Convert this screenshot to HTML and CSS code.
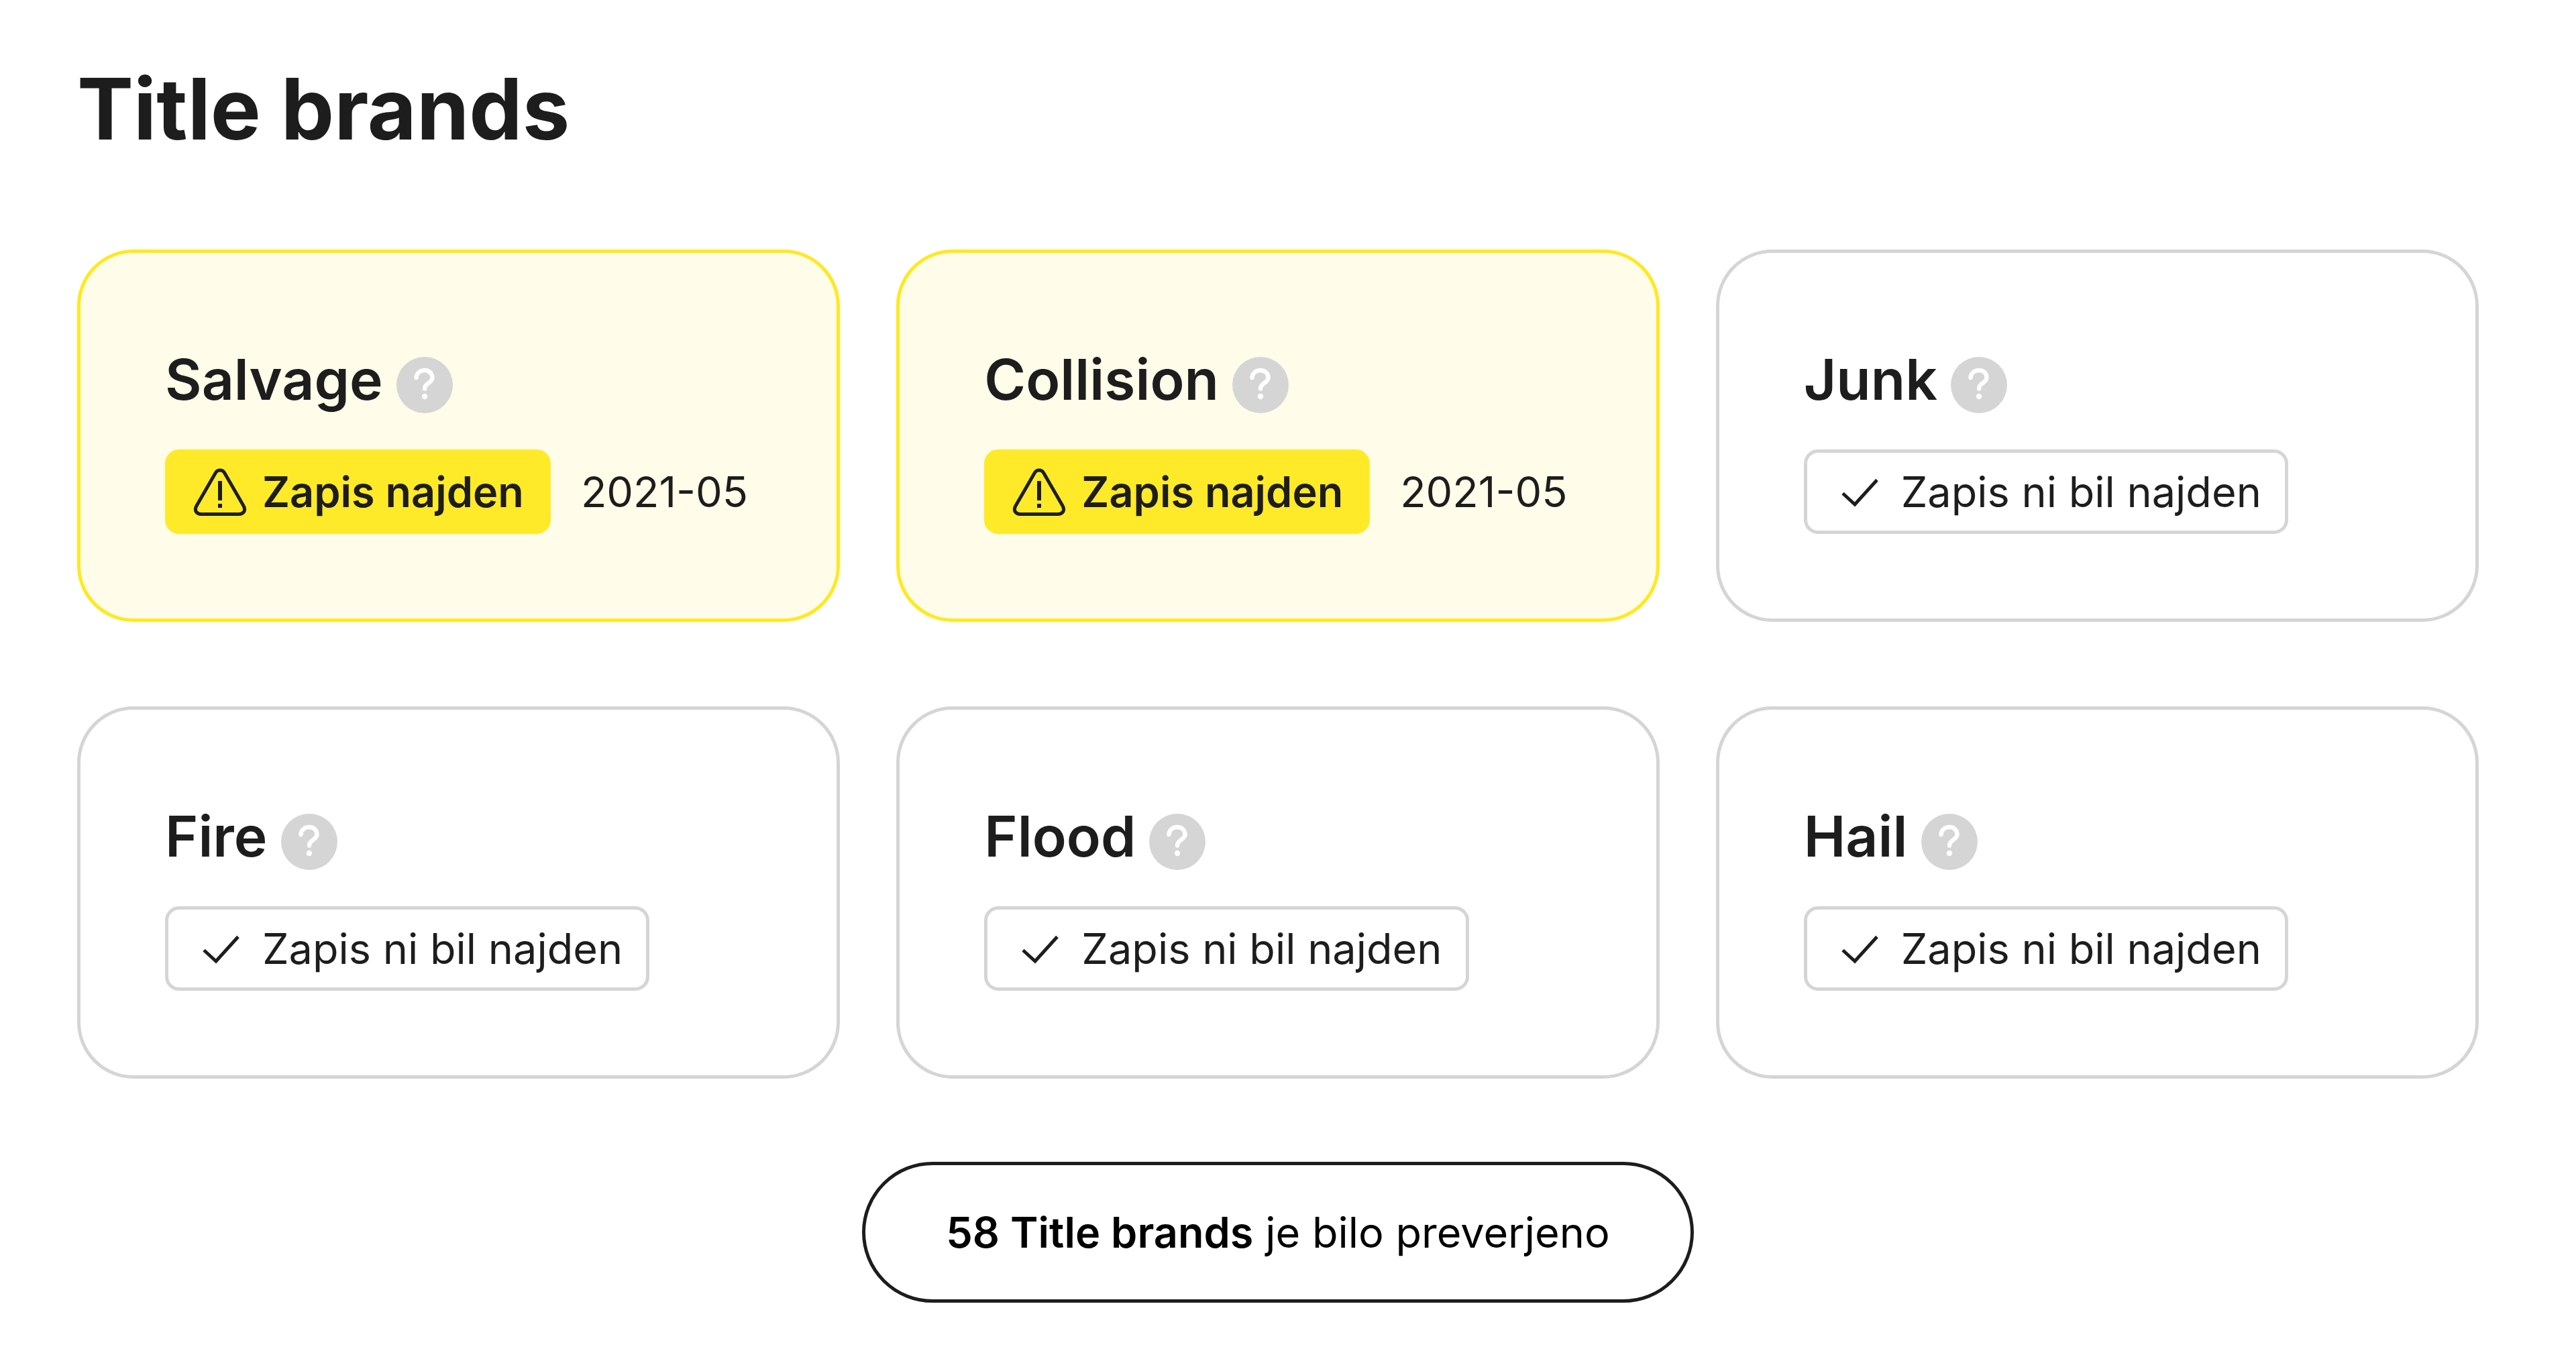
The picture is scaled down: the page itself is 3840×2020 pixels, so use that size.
FILE: index.html
```html
<!DOCTYPE html>
<html lang="sl">
<head>
    <meta charset="UTF-8">
    <title>Title brands</title>
    <link rel="stylesheet" href="styles.css">
</head>
<body>

<!-- shared icons -->
<svg class="sprite" aria-hidden="true">
    <symbol id="icon-help" viewBox="0 0 84 84">
        <circle cx="42" cy="42" r="42" fill="#d5d5d5"/>
        <path d="M29.5 31C30 24 35.5 20 42 20C49 20 53.5 25 53.5 31C53.5 39 42 39 42 47.5" fill="none" stroke="#fff" stroke-width="6.5" stroke-linecap="round"/>
        <circle cx="42" cy="59" r="4.2" fill="#fff"/>
    </symbol>
    <symbol id="icon-warning" viewBox="0 0 84 84">
        <path d="M35 14.5L7 63C3 70 7 75.5 14 75.5H70C77 75.5 81 70 77 63L49 14.5C46 8.500 38 8.500 35 14.5Z" fill="none" stroke="#1d1d1f" stroke-width="5"/>
        <path d="M42 26V55M42 60V66" fill="none" stroke="#1d1d1f" stroke-width="6"/>
    </symbol>
    <symbol id="icon-check" viewBox="0 0 84 84">
        <path d="M18 44.500L36 61L69 24.500" fill="none" stroke="#1d1d1d" stroke-width="5"/>
    </symbol>
</svg>

<main class="wrapper">
    <h1>Title brands</h1>

    <ul class="brand-list">
        <li class="card found">
            <div class="card-title">
                <h2>Salvage</h2>
                <button class="help" type="button" aria-label="Salvage"><svg><use href="#icon-help"/></svg></button>
            </div>
            <div class="card-status">
                <span class="badge"><svg><use href="#icon-warning"/></svg>Zapis najden</span>
                <time datetime="2021-05">2021-05</time>
            </div>
        </li>
        <li class="card found">
            <div class="card-title">
                <h2>Collision</h2>
                <button class="help" type="button" aria-label="Collision"><svg><use href="#icon-help"/></svg></button>
            </div>
            <div class="card-status">
                <span class="badge"><svg><use href="#icon-warning"/></svg>Zapis najden</span>
                <time datetime="2021-05">2021-05</time>
            </div>
        </li>
        <li class="card">
            <div class="card-title">
                <h2>Junk</h2>
                <button class="help" type="button" aria-label="Junk"><svg><use href="#icon-help"/></svg></button>
            </div>
            <div class="card-status">
                <span class="badge"><svg><use href="#icon-check"/></svg>Zapis ni bil najden</span>
            </div>
        </li>
        <li class="card">
            <div class="card-title">
                <h2>Fire</h2>
                <button class="help" type="button" aria-label="Fire"><svg><use href="#icon-help"/></svg></button>
            </div>
            <div class="card-status">
                <span class="badge"><svg><use href="#icon-check"/></svg>Zapis ni bil najden</span>
            </div>
        </li>
        <li class="card">
            <div class="card-title">
                <h2>Flood</h2>
                <button class="help" type="button" aria-label="Flood"><svg><use href="#icon-help"/></svg></button>
            </div>
            <div class="card-status">
                <span class="badge"><svg><use href="#icon-check"/></svg>Zapis ni bil najden</span>
            </div>
        </li>
        <li class="card">
            <div class="card-title">
                <h2>Hail</h2>
                <button class="help" type="button" aria-label="Hail"><svg><use href="#icon-help"/></svg></button>
            </div>
            <div class="card-status">
                <span class="badge"><svg><use href="#icon-check"/></svg>Zapis ni bil najden</span>
            </div>
        </li>
    </ul>

    <p class="summary"><strong>58 Title brands</strong> je bilo preverjeno</p>
</main>

</body>
</html>
```

FILE: styles.css
```css
html, body, h1, h2, ul, li, p {
    margin: 0;
    padding: 0;
}
* {
    box-sizing: border-box;
}
body {
    font-family: Inter, "Liberation Sans", sans-serif;
    font-size: 63px;
    line-height: 84px;
    color: #1d1d1d;
    background-color: #fff;
}
.sprite {
    display: none;
}
.wrapper {
    display: flex;
    flex-direction: column;
    padding: 84px 145px 78px 115px;
}
h1 {
    font-size: 126px;
    line-height: 156px;
    font-weight: 700;
    margin-bottom: 132px;
}
.brand-list {
    list-style-type: none;
    display: grid;
    grid-template-columns: repeat(3, 1fr);
    gap: 126px 84px;
}
.card {
    padding: 126px;
    border: 5px solid #d5d5d5;
    border-radius: 84px;
}
.card.found {
    border-color: #ffe91f;
    background-color: #fffce9;
}
.card-title {
    display: flex;
    align-items: center;
    gap: 20px;
    margin-bottom: 42px;
}
h2 {
    font-size: 84px;
    line-height: 125px;
    font-weight: 600;
}
.help {
    width: 84px;
    height: 84px;
    margin-top: 16px;
    padding: 0;
    border: none;
    background: none;
    cursor: pointer;
}
.help svg, .badge svg {
    display: block;
    width: 84px;
    height: 84px;
}
.card-status {
    display: flex;
    align-items: center;
    gap: 45px;
    white-space: nowrap;
}
.badge {
    display: flex;
    align-items: center;
    gap: 21px;
    padding: 16px 35px;
    border: 5px solid #d5d5d5;
    border-radius: 21px;
}
.found .badge {
    font-weight: 600;
    border-color: #ffea29;
    background-color: #ffea29;
}
.summary {
    align-self: center;
    margin-top: 124px;
    padding: 58px 120px;
    border: 5px solid #1d1d1d;
    border-radius: 105px;
    color: #000;
}
.summary strong {
    font-weight: 600;
}

@media (max-width: 3200px) {
    .brand-list {
        grid-template-columns: repeat(auto-fit, minmax(min(1137px, 100%), 1fr));
    }
}
```
